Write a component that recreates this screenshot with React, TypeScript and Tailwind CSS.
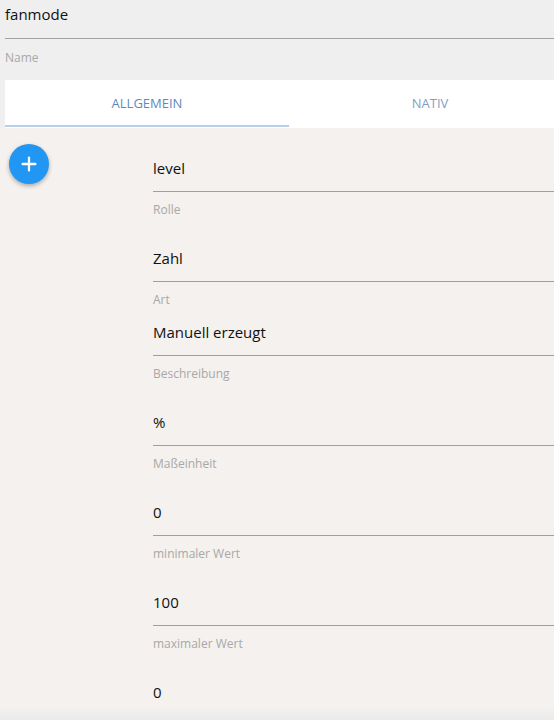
import { Plus } from "lucide-react";

const FONT = { fontFamily: '"Open Sans", "Noto Sans", sans-serif' };

type Field = { value: string; label: string; labelH: string };

const FIELDS: Field[] = [
  { value: "level", label: "Rolle", labelH: "h-[56px]" },
  { value: "Zahl", label: "Art", labelH: "h-[40px]" },
  { value: "Manuell erzeugt", label: "Beschreibung", labelH: "h-[56px]" },
  { value: "%", label: "Maßeinheit", labelH: "h-[56px]" },
  { value: "0", label: "minimaler Wert", labelH: "h-[56px]" },
  { value: "100", label: "maximaler Wert", labelH: "h-[56px]" },
];

function FieldRow({ field }: { field: Field }) {
  return (
    <div>
      <div className="h-[34px] border-b border-[#a19e9b] text-[15px] leading-[20px] text-[#111]">
        {field.value}
      </div>
      <div className={`${field.labelH} pt-[10px] text-[12px] leading-[16px] text-[#a8a8a8]`}>
        {field.label}
      </div>
    </div>
  );
}

export default function App() {
  return (
    <div className="w-[554px] h-[720px] overflow-hidden bg-[#efefef] flex flex-col" style={FONT}>
      {/* Name */}
      <div className="pl-[5px]">
        <div className="h-[39px] border-b border-[#a3a3a3] pt-[4px] text-[15px] leading-[20px] text-[#111]">
          fanmode
        </div>
        <div className="h-[41px] pt-[11px] text-[12px] leading-[16px] text-[#a8a8a8]">Name</div>
      </div>

      {/* Tabs */}
      <div className="ml-[5px] h-[48px] bg-white flex">
        <button className="relative w-[284px] flex items-center justify-center text-[13px] text-[#5b8bbf]">
          ALLGEMEIN
          <span className="absolute left-0 right-0 bottom-[1px] h-[2px] bg-[#b4d0ea]" />
        </button>
        <button className="flex-1 pl-[17px] flex items-center justify-center text-[13px] text-[#7f9fc4]">
          NATIV
        </button>
      </div>

      {/* Content */}
      <div className="flex-1 bg-[#f4f1ee] flex">
        <div className="w-[153px] shrink-0 pl-[9px] pt-[16px]">
          <button className="w-[40px] h-[40px] rounded-full bg-[#2196f3] shadow-[0_2px_4px_rgba(0,0,0,0.3)] flex items-center justify-center text-white">
            <Plus size={22} strokeWidth={2.5} />
          </button>
        </div>
        <div className="flex-1 pt-[30px]">
          {FIELDS.map((f) => (
            <FieldRow key={f.label} field={f} />
          ))}
          <div className="text-[15px] leading-[20px] text-[#111]">0</div>
        </div>
      </div>
      <div className="h-[12px] bg-gradient-to-b from-[#f2f1ef] to-[#ebebeb]" />
    </div>
  );
}
